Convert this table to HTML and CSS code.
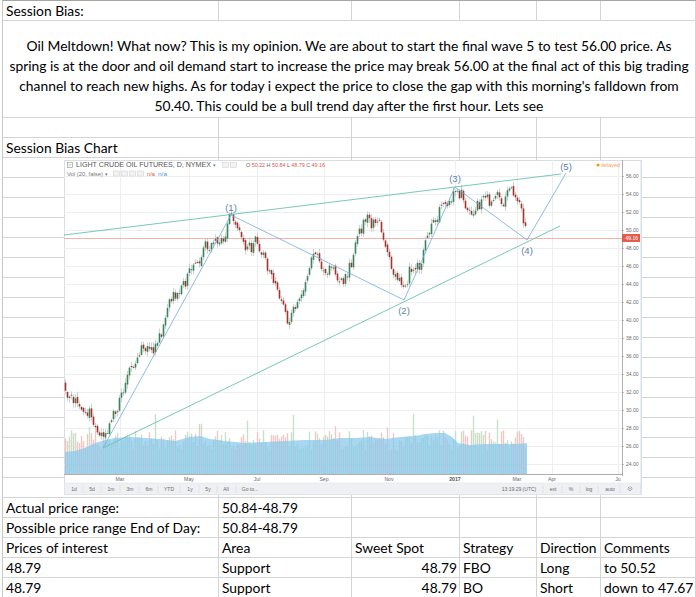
FILE: index.html
```html
<!DOCTYPE html>
<html>
<head>
<meta charset="utf-8">
<title>Session Bias</title>
<link rel="stylesheet" href="styles.css">
</head>
<body>
<div class="sheet">
  <div class="row"><div>Session Bias:</div><div></div><div></div><div></div><div></div><div></div></div>
  <div class="row tall"><div class="merged">Oil Meltdown! What now? This is my opinion. We are about to start the final wave 5 to test 56.00 price. As<br>spring is at the door and oil demand start to increase the price may break 56.00 at the final act of this big trading<br>channel to reach new highs. As for today i expect the price to close the gap with this morning's falldown from<br>50.40. This could be a bull trend day after the first hour. Lets see</div></div>
  <div class="row"><div></div><div></div><div></div><div></div><div></div><div></div></div>
  <div class="row"><div>Session Bias Chart</div><div></div><div></div><div></div><div></div><div></div></div>
  <div class="row"><div></div><div></div><div></div><div></div><div></div><div></div></div>
  <div class="row"><div></div><div></div><div></div><div></div><div></div><div></div></div>
  <div class="row"><div></div><div></div><div></div><div></div><div></div><div></div></div>
  <div class="row"><div></div><div></div><div></div><div></div><div></div><div></div></div>
  <div class="row"><div></div><div></div><div></div><div></div><div></div><div></div></div>
  <div class="row"><div></div><div></div><div></div><div></div><div></div><div></div></div>
  <div class="row"><div></div><div></div><div></div><div></div><div></div><div></div></div>
  <div class="row"><div></div><div></div><div></div><div></div><div></div><div></div></div>
  <div class="row"><div></div><div></div><div></div><div></div><div></div><div></div></div>
  <div class="row"><div></div><div></div><div></div><div></div><div></div><div></div></div>
  <div class="row"><div></div><div></div><div></div><div></div><div></div><div></div></div>
  <div class="row"><div></div><div></div><div></div><div></div><div></div><div></div></div>
  <div class="row"><div></div><div></div><div></div><div></div><div></div><div></div></div>
  <div class="row"><div></div><div></div><div></div><div></div><div></div><div></div></div>
  <div class="row"><div></div><div></div><div></div><div></div><div></div><div></div></div>
  <div class="row"><div></div><div></div><div></div><div></div><div></div><div></div></div>
  <div class="row"><div></div><div></div><div></div><div></div><div></div><div></div></div>
  <div class="row"><div>Actual price range:</div><div>50.84-48.79</div><div></div><div></div><div></div><div></div></div>
  <div class="row"><div>Possible price range End of Day:</div><div>50.84-48.79</div><div></div><div></div><div></div><div></div></div>
  <div class="row"><div>Prices of interest</div><div>Area</div><div>Sweet Spot</div><div>Strategy</div><div>Direction</div><div>Comments</div></div>
  <div class="row"><div>48.79</div><div>Support</div><div class="num">48.79</div><div>FBO</div><div>Long</div><div>to 50.52</div></div>
  <div class="row"><div>48.79</div><div>Support</div><div class="num">48.79</div><div>BO</div><div>Short</div><div>down to 47.67</div></div>

  <div class="chart">
    <svg class="chart-svg" viewBox="64 160 578 335" width="578" height="335">
      <rect x="64.5" y="160.5" width="577" height="334" fill="#fff" stroke="#d9dde2"/>
      <path class="grid" d="M64 176.5H622M64 194.5H622M64 212.5H622M64 230.5H622M64 248.5H622M64 266.5H622M64 284.5H622M64 302.5H622M64 320.5H622M64 338.5H622M64 356.5H622M64 374.5H622M64 392.5H622M64 410.5H622M64 428.5H622M64 446.5H622M64 464.5H622M120.5 160V474M189.5 160V474M257.5 160V474M324.5 160V474M389.5 160V474M455.5 160V474M517.5 160V474M552.5 160V474M618.5 160V474"/>
      <g id="vol"></g>
      <path class="vol-ma" d="M65 474L65 452L75 451L85 448L95 443L105 440L115 438L130 437L145 438L160 439L175 441L190 437L200 436L210 439L225 441L245 443L265 442L285 441L305 440L325 440L340 438L355 438L370 437L385 439L400 437L415 436L425 434L435 433L445 433L452 437L458 443L470 445L485 444L500 444L515 444L527 443L527 474Z"/>
      <path class="last-line" d="M64 238.5H622"/>
      <g id="candles"></g>
      <path class="channel" d="M64 235L561 174M103 448L560 226"/>
      <path class="wave" d="M103 448L231 215L404 300L455 187L527 240L566 173"/>
      <g class="wave-lbl">
        <text x="231" y="210.5">(1)</text>
        <text x="404" y="313.5">(2)</text>
        <text x="455" y="181.5">(3)</text>
        <text x="527" y="253.5">(4)</text>
        <text x="566" y="169.5">(5)</text>
      </g>

      <g class="hdr">
        <rect x="67.5" y="162.5" width="5" height="5" fill="none" stroke="#8a8a8a" stroke-width="0.6"/>
        <path d="M68.5 165H71.5" stroke="#8a8a8a" stroke-width="0.6"/>
        <text x="76" y="167.3" textLength="135" lengthAdjust="spacingAndGlyphs" class="t-main">LIGHT CRUDE OIL FUTURES, D, NYMEX</text>
        <text x="213" y="167" class="t-dim">▾</text>
        <rect x="222.5" y="162.5" width="6" height="5" class="box"/>
        <rect x="230.5" y="162.5" width="6" height="5" class="box"/>
        <text x="246" y="167" textLength="79" lengthAdjust="spacingAndGlyphs" class="t-ohlc"><tspan class="k">O</tspan> 50.22 <tspan class="k">H</tspan> 50.84 <tspan class="k">L</tspan> 48.79 <tspan class="k">C</tspan> 49.16</text>
        <text x="67" y="175.5" textLength="36" lengthAdjust="spacingAndGlyphs" class="t-dim">Vol (20, false)</text>
        <text x="105" y="175.5" class="t-dim">▾</text>
        <rect x="113.5" y="171" width="6" height="5" class="box"/>
        <rect x="121.5" y="171" width="6" height="5" class="box"/>
        <rect x="129.5" y="171" width="6" height="5" class="box"/>
        <rect x="137.5" y="171" width="6" height="5" class="box"/>
        <text x="147" y="175.5" textLength="8" lengthAdjust="spacingAndGlyphs" class="t-red">n/a</text>
        <text x="158" y="175.5" textLength="9" lengthAdjust="spacingAndGlyphs" class="t-blue">n/a</text>
        <circle cx="598" cy="165" r="1.6" fill="#f7931e"/>
        <text x="601" y="167" textLength="19" lengthAdjust="spacingAndGlyphs" class="t-orange">delayed</text>
      </g>

      <path class="axis" d="M622.5 160V476M64 474.5H622"/>
      <path class="ticks" d="M622 176.5h2M622 194.5h2M622 212.5h2M622 230.5h2M622 248.5h2M622 266.5h2M622 284.5h2M622 302.5h2M622 320.5h2M622 338.5h2M622 356.5h2M622 374.5h2M622 392.5h2M622 410.5h2M622 428.5h2M622 446.5h2M622 464.5h2"/>
      <g class="price">
        <text x="626" y="178">56.00</text>
        <text x="626" y="196">54.00</text>
        <text x="626" y="214">52.00</text>
        <text x="626" y="232">50.00</text>
        <text x="626" y="250">48.00</text>
        <text x="626" y="268">46.00</text>
        <text x="626" y="286">44.00</text>
        <text x="626" y="304">42.00</text>
        <text x="626" y="322">40.00</text>
        <text x="626" y="340">38.00</text>
        <text x="626" y="358">36.00</text>
        <text x="626" y="376">34.00</text>
        <text x="626" y="394">32.00</text>
        <text x="626" y="412">30.00</text>
        <text x="626" y="430">28.00</text>
        <text x="626" y="448">26.00</text>
        <text x="626" y="466">24.00</text>
      </g>
      <rect x="622" y="234" width="18" height="8" fill="#e35d4f"/>
      <text x="625.5" y="240" class="tag">49.16</text>
      <g class="months">
        <text x="120" y="481">Mar</text>
        <text x="189" y="481">May</text>
        <text x="257" y="481">Jul</text>
        <text x="324" y="481">Sep</text>
        <text x="389" y="481">Nov</text>
        <text x="455" y="481" class="yr">2017</text>
        <text x="517" y="481">Mar</text>
        <text x="552" y="481">Apr</text>
        <text x="618" y="481">Ju</text>
      </g>
      <rect x="64.5" y="483" width="577" height="11.5" fill="#eef0f3" stroke="#dfe3e8" stroke-width="0.6"/>
      <path class="sep" d="M83 485V493M101 485V493M120 485V493M139 485V493M158 485V493M180 485V493M199 485V493M217 485V493M236 485V493M543 485V493M562 485V493M580 485V493M598 485V493M620 485V493"/>
      <g class="tb">
        <text x="74" y="490.5">1d</text>
        <text x="92" y="490.5">5d</text>
        <text x="111" y="490.5">1m</text>
        <text x="130" y="490.5">3m</text>
        <text x="149" y="490.5">6m</text>
        <text x="169" y="490.5">YTD</text>
        <text x="190" y="490.5">1y</text>
        <text x="208" y="490.5">5y</text>
        <text x="226" y="490.5">All</text>
        <text x="250" y="490.5">Go to...</text>
        <text x="519" y="490.5">13:19:29 (UTC)</text>
        <text x="553" y="490.5">ext</text>
        <text x="571" y="490.5">%</text>
        <text x="589" y="490.5">log</text>
        <text x="610" y="490.5">auto</text>
      </g>
      <circle cx="630" cy="488.7" r="1.9" fill="none" stroke="#777" stroke-width="0.8" stroke-dasharray="1 0.5"/>
      <circle cx="630" cy="488.7" r="0.6" fill="#777"/>
      <path d="M641 160V495" stroke="#cfe3ea" stroke-width="1"/>
    </svg>
  </div>
</div>
<script src="chart.js"></script>
</body>
</html>
```

FILE: styles.css
```css
html, body {
  margin: 0;
  padding: 0;
  background: #ffffff;
}

body {
  font-family: Lato, "Liberation Sans", Arial, sans-serif;
  font-size: 13.85px;
  color: #000000;
  overflow: hidden;
}

.sheet {
  position: relative;
  margin-left: 2px;
  width: 694px;
  box-sizing: border-box;
  border-left: 1px solid #c8c8c8;
  border-top: 1px solid #a6a6a6;
}

.row {
  display: grid;
  grid-template-columns: 216px 133px 108px 77px 64px 95px;
  height: 20px;
}

.row > div {
  box-sizing: border-box;
  height: 20px;
  border-right: 1px solid #d4d4d4;
  border-bottom: 1px solid #d4d4d4;
  padding: 0 3px;
  line-height: 19px;
  white-space: nowrap;
}

.row > div.num {
  text-align: right;
  padding-right: 2px;
}

.row.tall {
  display: block;
  height: 97px;
}

.row.tall > div.merged {
  height: 97px;
  display: flex;
  flex-direction: column;
  justify-content: flex-end;
  text-align: center;
  line-height: 20px;
  padding: 0 0 1px 0;
}

.chart {
  position: absolute;
  left: 61px;
  top: 159px;
  width: 578px;
  height: 335px;
}

.chart-svg {
  display: block;
  font-family: "Liberation Sans", Arial, sans-serif;
}

.grid {
  stroke: #eeeeee;
  stroke-width: 1;
  fill: none;
}

.vol-ma {
  fill: #86c8ec;
  fill-opacity: 0.72;
}

.last-line {
  stroke: #f4aaa3;
  stroke-width: 0.9;
  fill: none;
}

.channel {
  stroke: #67c4ad;
  stroke-width: 0.9;
  fill: none;
}

.wave {
  stroke: #74a9de;
  stroke-width: 0.8;
  fill: none;
}

.wave-lbl text {
  font-size: 9.5px;
  fill: #5d7fae;
  text-anchor: middle;
}

.hdr .t-main {
  font-size: 6.4px;
  fill: #555555;
}

.hdr .t-dim {
  font-size: 5.4px;
  fill: #7a7a7a;
}

.hdr .box {
  fill: #f2f2f2;
  stroke: #cccccc;
  stroke-width: 0.5;
}

.hdr .t-ohlc {
  font-size: 5.4px;
  fill: #e0584c;
}

.hdr .t-ohlc .k {
  fill: #666666;
}

.hdr .t-red {
  font-size: 5.4px;
  fill: #e0584c;
}

.hdr .t-blue {
  font-size: 5.4px;
  fill: #4a9be0;
}

.hdr .t-orange {
  font-size: 5.4px;
  fill: #f7a35c;
}

.axis {
  stroke: #9a9a9a;
  stroke-width: 0.8;
  fill: none;
}

.ticks {
  stroke: #9a9a9a;
  stroke-width: 0.6;
}

.price text {
  font-size: 5px;
  fill: #6a6a6a;
}

.tag {
  font-size: 5px;
  fill: #ffffff;
}

.months text {
  font-size: 5.2px;
  fill: #6a6a6a;
  text-anchor: middle;
}

.months .yr {
  font-weight: bold;
  fill: #555555;
}

.sep {
  stroke: #d6dae0;
  stroke-width: 0.6;
}

.tb text {
  font-size: 5px;
  fill: #6c6c6c;
  text-anchor: middle;
}
```

FILE: chart.js
```js
(function () {
  var pts = [
    [65, 383], [72, 400], [80, 420], [88, 410], [95, 435], [103, 446],
    [110, 420], [120, 392], [130, 372], [140, 342], [150, 352], [160, 330],
    [170, 302], [180, 286], [190, 266], [200, 252], [210, 242], [220, 238],
    [226, 228], [231, 220], [240, 236], [248, 256], [255, 240], [262, 256],
    [270, 276], [280, 300], [290, 324], [297, 300], [305, 280], [312, 250],
    [318, 258], [325, 285], [332, 270], [340, 290], [348, 262], [356, 240],
    [362, 226], [370, 220], [378, 222], [386, 250], [392, 275], [398, 285],
    [404, 296], [410, 270], [415, 278], [420, 265], [428, 226], [434, 215],
    [440, 205], [446, 196], [455, 190], [462, 200], [468, 212], [474, 205],
    [480, 200], [490, 201], [500, 198], [508, 192], [515, 195], [520, 205],
    [524, 226], [527, 238]
  ];

  function target(x) {
    for (var i = 1; i < pts.length; i++) {
      if (x <= pts[i][0]) {
        var a = pts[i - 1], b = pts[i];
        var t = (x - a[0]) / (b[0] - a[0]);
        return a[1] + (b[1] - a[1]) * t;
      }
    }
    return pts[pts.length - 1][1];
  }

  var seed = 4242;
  function rnd() {
    seed = (seed * 16807) % 2147483647;
    return (seed - 1) / 2147483646;
  }
  function gauss() {
    return (rnd() + rnd() + rnd() - 1.5) * 1.4;
  }

  var cg = document.getElementById('candles');
  var vg = document.getElementById('vol');
  var wicks = '', ups = '', downs = '', vol = '';
  var prev = target(65);

  for (var x = 65.5; x <= 527.2; x += 2.0) {
    var t = target(x);
    var open = prev + gauss() * 1.5;
    var close = open + (t - open) * 0.55 + gauss() * 5.6;
    var top = Math.min(open, close), bot = Math.max(open, close);
    var hi = top - rnd() * 4 - 0.8;
    var lo = bot + rnd() * 4 + 0.8;
    var up = close < open;
    wicks += 'M' + x.toFixed(2) + ' ' + hi.toFixed(1) + 'V' + lo.toFixed(1);
    var h = Math.max(bot - top, 0.9);
    var rect = '<rect x="' + (x - 0.8).toFixed(2) + '" y="' + top.toFixed(1) +
      '" width="1.6" height="' + h.toFixed(1) + '"/>';
    if (up) { ups += rect; } else { downs += rect; }

    var vh = 24 + rnd() * 20 + (rnd() < 0.07 ? 16 : 0);
    vol += '<rect x="' + (x - 0.7).toFixed(2) + '" y="' + (474 - vh).toFixed(1) +
      '" width="1.4" height="' + vh.toFixed(1) + '" fill="' + (up ? '#c4e2c9' : '#efc8c5') + '"/>';
    prev = close;
  }

  vg.innerHTML = vol;
  cg.innerHTML =
    '<path d="' + wicks + '" stroke="#b0b0b0" stroke-width="0.6" fill="none"/>' +
    '<g fill="#37855a">' + ups + '</g>' +
    '<g fill="#a3342c">' + downs + '</g>';
})();
```
